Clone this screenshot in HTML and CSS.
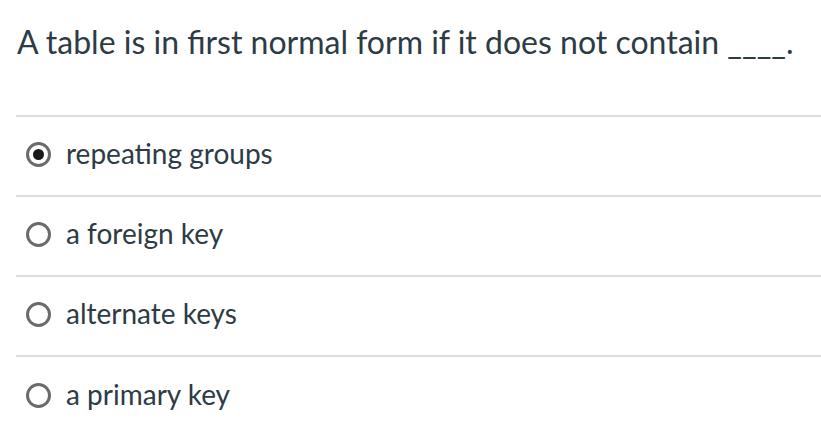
FILE: index.html
```html
<!DOCTYPE html>
<html>
<head>
<meta charset="utf-8">
<link rel="stylesheet" href="styles.css">
</head>
<body>
<div class="question">
  <div class="prompt">A table is in first normal form if it does not contain ____.</div>
  <div class="answers">
    <label class="answer">
      <span class="radio checked"></span>
      <span class="label">repeating groups</span>
    </label>
    <label class="answer">
      <span class="radio"></span>
      <span class="label">a foreign key</span>
    </label>
    <label class="answer">
      <span class="radio"></span>
      <span class="label">alternate keys</span>
    </label>
    <label class="answer">
      <span class="radio"></span>
      <span class="label">a primary key</span>
    </label>
  </div>
</div>
</body>
</html>
```
FILE: styles.css
```css
html, body {
  margin: 0;
  padding: 0;
  background: #ffffff;
}
body {
  font-family: Lato, "Open Sans", sans-serif;
  color: #2d3b45;
}
.question {
  padding-left: 16px;
}
.prompt {
  font-size: 32px;
  line-height: 40px;
  padding-top: 22px;
  padding-left: 1px;
  height: 115px;
  box-sizing: border-box;
}
.answers {
  border-top: 2px solid #dddddd;
}
.answer {
  display: flex;
  align-items: center;
  box-sizing: border-box;
  height: 80px;
  padding-bottom: 4px;
  border-bottom: 2px solid #dddddd;
  padding-left: 10px;
  gap: 15px;
}
.answer:last-child {
  border-bottom: none;
}
.radio {
  width: 19px;
  height: 19px;
  border: 3px solid #6b6b6b;
  border-radius: 50%;
  display: flex;
  align-items: center;
  justify-content: center;
  flex: none;
}
.radio.checked::after {
  content: "";
  width: 11px;
  height: 11px;
  border-radius: 50%;
  background: #1a1a1a;
}
.label {
  font-size: 28px;
  padding-bottom: 3px;
}
```
